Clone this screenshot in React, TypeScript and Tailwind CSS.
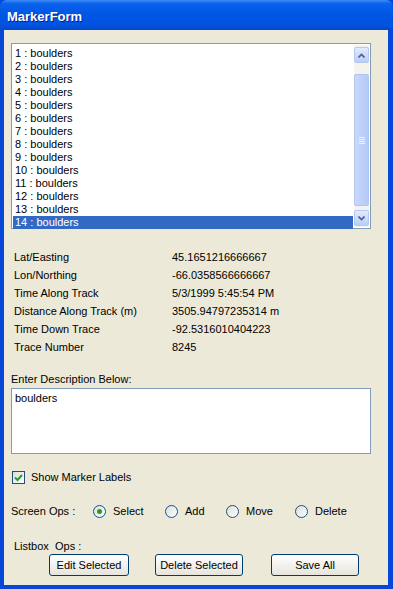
import { useState } from 'react';

const items = Array.from({ length: 14 }, (_, i) => `${i + 1} : boulders`);

const info = [
  { label: 'Lat/Easting', value: '45.1651216666667' },
  { label: 'Lon/Northing', value: '-66.0358566666667' },
  { label: 'Time Along Track', value: '5/3/1999 5:45:54 PM' },
  { label: 'Distance Along Track (m)', value: '3505.94797235314 m' },
  { label: 'Time Down Trace', value: '-92.5316010404223' },
  { label: 'Trace Number', value: '8245' },
];

const ops = [
  { name: 'Select', w: 'w-[72px]' },
  { name: 'Add', w: 'w-[61px]' },
  { name: 'Move', w: 'w-[69px]' },
  { name: 'Delete', w: 'w-[60px]' },
];

function Radio({ checked }: { checked: boolean }) {
  return (
    <svg width="13" height="13" viewBox="0 0 13 13">
      <defs>
        <linearGradient id="rg" x1="0" y1="0" x2="1" y2="1">
          <stop offset="0" stopColor="#dcdcd7" />
          <stop offset="1" stopColor="#ffffff" />
        </linearGradient>
      </defs>
      <circle cx="6.5" cy="6.5" r="6" fill="url(#rg)" stroke="#1c5180" strokeWidth="1" />
      {checked && <circle cx="6.5" cy="6.5" r="2.5" fill="#21a121" />}
    </svg>
  );
}

function Button({ label, w }: { label: string; w: string }) {
  return (
    <button
      className={`${w} h-[22px] rounded-[3px] border border-[#003c74] bg-gradient-to-b from-white to-[#e6e4dc] text-[11px] leading-none text-black`}
    >
      {label}
    </button>
  );
}

export default function App() {
  const [selected, setSelected] = useState(13);
  const [op, setOp] = useState('Select');
  const [show, setShow] = useState(true);

  return (
    <div className="w-[393px] h-[589px] flex flex-col bg-[#0747d8] font-['Liberation_Sans',Arial,sans-serif] text-[11px] text-black overflow-hidden">
      {/* Title bar */}
      <div className="h-[30px] shrink-0 rounded-t-[7px] bg-[linear-gradient(to_bottom,#3d8ef6_0%,#0a62ec_12%,#0057e6_45%,#0152df_85%,#0148cf_100%)] flex items-center pl-[7px] pt-[3px]">
        <span className="text-white font-bold text-[13px] [text-shadow:1px_1px_0_#0a1e8c]">MarkerForm</span>
      </div>

      {/* Body */}
      <div className="flex-1 ml-[4px] mr-[5px] mb-[4px] bg-[#ece9d8] flex flex-col pl-[7px] pr-[10px] pt-[13px]">
        {/* Listbox */}
        <div className="w-[360px] h-[186px] border border-[#7f9db9] bg-white flex p-px">
          <div className="flex-1 pt-[2px]">
            {items.map((it, i) => (
              <div
                key={it}
                onClick={() => setSelected(i)}
                className={`h-[13px] leading-[13px] pl-[2px] ${i === selected ? 'bg-[#316ac5] text-white' : ''}`}
              >
                {it}
              </div>
            ))}
          </div>
          {/* Scrollbar */}
          <div className="w-[15px] flex flex-col bg-[#f4f3ee] ml-px">
            <div className="h-[16px] mt-[2px] rounded-[2px] border border-[#b6c8f1] bg-gradient-to-b from-[#e3ebfd] to-[#b8cdf8] flex items-center justify-center">
              <svg width="7" height="5" viewBox="0 0 7 5"><path d="M0.5 4.5 L3.5 1.5 L6.5 4.5" fill="none" stroke="#4d6185" strokeWidth="1.6" /></svg>
            </div>
            <div className="flex-1 pt-[11px] pb-[4px]">
              <div className="h-full rounded-[2px] border border-[#b1c5f3] bg-gradient-to-r from-[#c9d8fc] to-[#b4c9f6] flex items-center justify-center">
                <div className="flex flex-col gap-px">
                  <div className="w-[6px] h-px bg-[#eef3fe]" />
                  <div className="w-[6px] h-px bg-[#eef3fe]" />
                  <div className="w-[6px] h-px bg-[#eef3fe]" />
                  <div className="w-[6px] h-px bg-[#eef3fe]" />
                </div>
              </div>
            </div>
            <div className="h-[16px] mb-px rounded-[2px] border border-[#b6c8f1] bg-gradient-to-b from-[#e3ebfd] to-[#b8cdf8] flex items-center justify-center">
              <svg width="7" height="5" viewBox="0 0 7 5"><path d="M0.5 0.5 L3.5 3.5 L6.5 0.5" fill="none" stroke="#4d6185" strokeWidth="1.6" /></svg>
            </div>
          </div>
        </div>

        {/* Info */}
        <div className="mt-[19px] pl-[3px] flex flex-col">
          {info.map((r) => (
            <div key={r.label} className="h-[18px] flex items-center">
              <span className="w-[158px]">{r.label}</span>
              <span>{r.value}</span>
            </div>
          ))}
        </div>

        {/* Description */}
        <div className="mt-[17px] leading-[13px]">Enter Description Below:</div>
        <div className="mt-[2px] w-[360px] h-[66px] border border-[#7f9db9] bg-white px-[3px] pt-[3px] leading-[13px]">
          boulders
        </div>

        {/* Checkbox */}
        <label className="mt-[17px] flex items-center gap-[6px] pl-px h-[13px]" onClick={() => setShow(!show)}>
          <span className="w-[13px] h-[13px] border border-[#1c5180] bg-gradient-to-br from-[#dcdcd7] to-white flex items-center justify-center">
            {show && (
              <svg width="9" height="9" viewBox="0 0 9 9"><path d="M1 4.5 L3.5 7 L8 2" fill="none" stroke="#21a121" strokeWidth="2" /></svg>
            )}
          </span>
          <span>Show Marker Labels</span>
        </label>

        {/* Screen ops */}
        <div className="mt-[21px] h-[13px] flex items-center">
          <span className="w-[82px]">Screen Ops :</span>
          {ops.map((o) => (
            <div key={o.name} className={`${o.w} flex items-center gap-[7px]`} onClick={() => setOp(o.name)}>
              <Radio checked={op === o.name} />
              <span>{o.name}</span>
            </div>
          ))}
        </div>

        {/* Listbox ops */}
        <div className="mt-[22px] pl-[3px] leading-[13px]">Listbox&nbsp; Ops :</div>
        <div className="mt-[1px] flex pl-[38px]">
          <Button label="Edit Selected" w="w-[80px]" />
          <div className="w-[26px]" />
          <Button label="Delete Selected" w="w-[88px]" />
          <div className="w-[28px]" />
          <Button label="Save All" w="w-[88px]" />
        </div>
      </div>
    </div>
  );
}
